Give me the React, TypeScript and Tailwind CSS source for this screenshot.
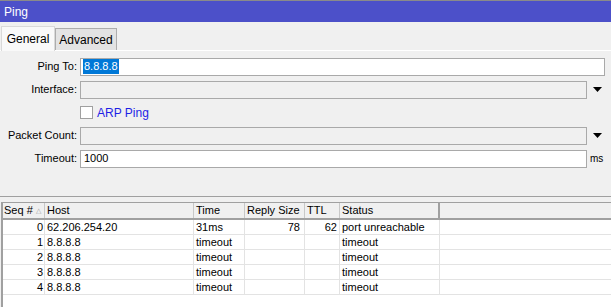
import React from "react";

const rows = [
  { seq: "0", host: "62.206.254.20", time: "31ms", size: "78", ttl: "62", status: "port unreachable" },
  { seq: "1", host: "8.8.8.8", time: "timeout", size: "", ttl: "", status: "timeout" },
  { seq: "2", host: "8.8.8.8", time: "timeout", size: "", ttl: "", status: "timeout" },
  { seq: "3", host: "8.8.8.8", time: "timeout", size: "", ttl: "", status: "timeout" },
  { seq: "4", host: "8.8.8.8", time: "timeout", size: "", ttl: "", status: "timeout" },
];

function Arrow() {
  return (
    <svg width="9" height="5" viewBox="0 0 9 5" className="ml-[6px]">
      <path d="M0 0h9L4.5 5z" fill="#000" />
    </svg>
  );
}

function Label({ children }: { children: React.ReactNode }) {
  return <div className="w-[77px] text-right text-[#000] leading-[17px]">{children}</div>;
}

export default function App() {
  return (
    <div
      className="w-[611px] h-[307px] bg-[#f0f0f0] overflow-hidden text-[11px] text-black"
      style={{ fontFamily: '"Liberation Sans", Arial, sans-serif' }}
    >
      {/* Title bar */}
      <div className="h-[22px] border-t border-[#8a8a8a] bg-[#4c50c9] text-white text-[12px] flex items-center pl-[4px]">
        Ping
      </div>

      {/* Tabs */}
      <div className="flex items-end pt-[3px] pl-[1px] h-[28px]">
        <div className="w-[54px] h-[25px] bg-[#f9f9f9] border border-b-0 border-[#d9d9d9] flex items-center justify-center text-[12px] relative z-10 -mb-[1px]">
          General
        </div>
        <div className="w-[62px] h-[22px] bg-[#e3e3e3] border border-b-0 border-[#adadad] flex items-center justify-center text-[12px]">
          Advanced
        </div>
      </div>

      {/* Form panel */}
      <div className="border-t border-[#ffffff] h-[146px] flex flex-col gap-[6px] pt-[7px]">
        <div className="flex items-center h-[17px]">
          <Label>Ping To:</Label>
          <div className="ml-[3px] w-[525px] h-[18px] bg-white border border-[#a9a9a9] flex items-center pl-[2px]">
            <span className="bg-[#0078d7] text-white leading-[15px] px-[1px]">8.8.8.8</span>
          </div>
        </div>
        <div className="flex items-center h-[17px]">
          <Label>Interface:</Label>
          <div className="ml-[3px] w-[507px] h-[18px] bg-[#f0f0f0] border border-[#a9a9a9]" />
          <Arrow />
        </div>
        <div className="flex items-center h-[17px]">
          <div className="w-[80px]" />
          <div className="w-[13px] h-[13px] bg-white border border-[#a0a0a0]" />
          <span className="ml-[4px] text-[#1f1fe6] text-[12px]">ARP Ping</span>
        </div>
        <div className="flex items-center h-[17px]">
          <Label>Packet Count:</Label>
          <div className="ml-[3px] w-[507px] h-[18px] bg-[#f0f0f0] border border-[#a9a9a9]" />
          <Arrow />
        </div>
        <div className="flex items-center h-[17px]">
          <Label>Timeout:</Label>
          <div className="ml-[3px] w-[507px] h-[18px] bg-white border border-[#a9a9a9] flex items-center pl-[3px]">
            1000
          </div>
          <span className="ml-[3px] text-[10px]">ms</span>
        </div>
      </div>

      {/* Splitter */}
      <div className="border-t border-[#a0a0a0] mt-[0px] h-[6px]" />

      {/* Table */}
      <div className="border-t border-l-2 border-[#a0a0a0] bg-white h-[200px] ml-[1px]">
        <div className="flex h-[17px] bg-[#f0f0f0] border-b-2 border-[#a0a0a0] leading-[15px]">
          <div className="w-[42px] pl-[1px] border-r border-[#c8c8c8] flex items-center">
            Seq #
            <span className="ml-[3px] text-[7px] text-[#a0a0a0]">△</span>
          </div>
          <div className="w-[149px] pl-[2px] border-r border-[#c8c8c8]">Host</div>
          <div className="w-[51px] pl-[2px] border-r border-[#c8c8c8]">Time</div>
          <div className="w-[60px] pl-[2px] border-r border-[#c8c8c8]">Reply Size</div>
          <div className="w-[35px] pl-[2px] border-r border-[#c8c8c8]">TTL</div>
          <div className="w-[100px] pl-[2px] border-r-2 border-[#a0a0a0]">Status</div>
          <div className="flex-1" />
        </div>
        {rows.map((r) => (
          <div key={r.seq} className="flex h-[15px] border-b border-[#e3e3e3] leading-[14px]">
            <div className="w-[42px] pr-[1px] text-right border-r border-[#e3e3e3]">{r.seq}</div>
            <div className="w-[149px] pl-[2px] border-r border-[#e3e3e3]">{r.host}</div>
            <div className="w-[51px] pl-[2px] border-r border-[#e3e3e3]">{r.time}</div>
            <div className="w-[60px] pr-[4px] text-right border-r border-[#e3e3e3]">{r.size}</div>
            <div className="w-[35px] pr-[2px] text-right border-r border-[#e3e3e3]">{r.ttl}</div>
            <div className="w-[100px] pl-[2px] border-r border-[#e3e3e3]">{r.status}</div>
            <div className="flex-1" />
          </div>
        ))}
      </div>
    </div>
  );
}
